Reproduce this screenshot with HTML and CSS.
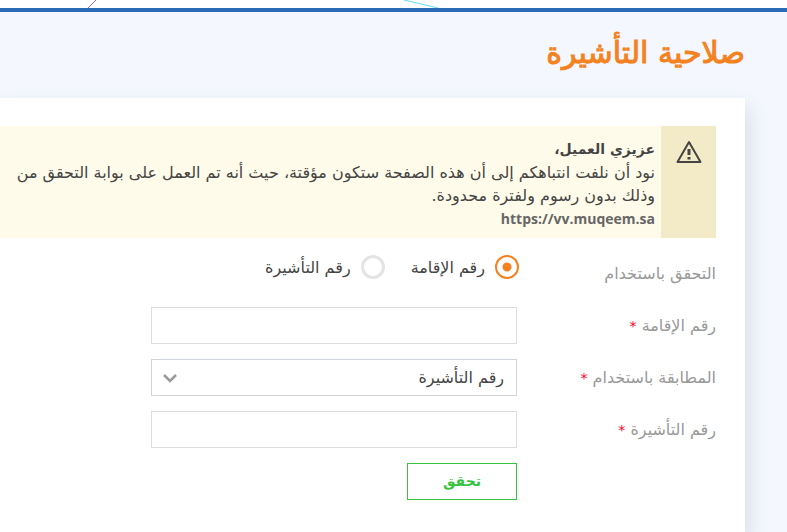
FILE: index.html
```html
<!DOCTYPE html>
<html lang="ar" dir="rtl">
<head>
<meta charset="utf-8">
<title>صلاحية التأشيرة</title>
<link rel="stylesheet" href="styles.css">
</head>
<body>
<header class="topbar">
<svg class="topbar-lines" width="460" height="8" viewBox="0 0 460 8" aria-hidden="true"><path d="M88 8L96 0" stroke="#a06aa8" fill="none"/><path d="M404 0L438 8" stroke="#5fdcf8" fill="none"/></svg>
</header>
<main class="page">
<h1 class="title">صلاحية التأشيرة</h1>
<section class="card">
<div class="notice">
<div class="notice-icon"><svg width="26" height="24" viewBox="0 0 26 24" fill="none" stroke="#444" stroke-width="2" stroke-linejoin="round"><path d="M13 2L24.500 22H1.500Z"/><path d="M13 9V15M13 17V19.500" stroke-width="3"/></svg></div>
<div class="notice-body">
<strong class="notice-title">عزيزي العميل،</strong>
<p>نود أن نلفت انتباهكم إلى أن هذه الصفحة ستكون مؤقتة، حيث أنه تم العمل على بوابة التحقق من</p>
<p>وذلك بدون رسوم ولفترة محدودة.</p>
<a href="https://vv.muqeem.sa" dir="ltr">https://vv.muqeem.sa</a>
</div>
</div>
<form class="form">
<div class="row" role="radiogroup" aria-labelledby="using">
<span class="label" id="using">التحقق باستخدام</span>
<div class="radios">
<label class="radio"><input type="radio" name="by" checked>رقم الإقامة</label>
<label class="radio"><input type="radio" name="by">رقم التأشيرة</label>
</div>
</div>
<div class="row"><label class="label" for="iqama">رقم الإقامة <span class="req">*</span></label><input class="control" id="iqama" type="text"></div>
<div class="row"><label class="label" for="match">المطابقة باستخدام <span class="req">*</span></label>
<div class="select-wrap"><select class="control" id="match"><option>رقم التأشيرة</option></select><svg class="chevron" width="14" height="9" viewBox="0 0 14 9" fill="none" stroke="#999" stroke-width="2.500"><path d="M1 1L7 7L13 1"/></svg></div></div>
<div class="row"><label class="label" for="visa">رقم التأشيرة <span class="req">*</span></label><input class="control" id="visa" type="text"></div>
<div class="row"><span class="label"></span><button class="submit" type="button">تحقق</button></div>
</form>
</section>
</main>
</body>
</html>
```

FILE: styles.css
```css
* { box-sizing: border-box; }
html { height: 100%; }
body { margin: 0; min-height: 100%; display: flex; flex-direction: column; overflow: hidden; background: #f4f8fe; color: #444; font: 16px/23px "DejaVu Sans", sans-serif; }
.topbar { height: 12px; border-bottom: 4px solid #2b6cb8; background: #fff; direction: ltr; }
.topbar-lines { display: block; }
.page { flex: 1; display: flex; flex-direction: column; padding-right: 42px; }
.title { margin: 20px 0 24px; font-size: 30px; font-weight: normal; line-height: 42px; color: #f58220; -webkit-text-stroke: 1px #f58220; }
.card { flex: 1; padding: 28px 29px 32px 0; background: #fff; box-shadow: 4px 10px 20px rgba(40, 60, 100, .14); }
.notice { display: flex; background: #fffbea; }
.notice-icon { flex: 0 0 55px; padding: 14px; background: #f3eac8; }
.notice-body { padding: 12px 6px 8px; white-space: nowrap; }
.notice-title { display: block; font-size: 14px; }
.notice-body p { margin: 0; }
.notice-body a { display: block; color: #666; font-family: "Open Sans", sans-serif; font-size: 14px; font-weight: bold; text-decoration: none; text-align: right; }
.form { display: flex; flex-direction: column; gap: 15px; padding-top: 17px; }
.row { display: flex; min-height: 37px; align-items: center; }
.label { flex: 0 0 199px; color: #999; }
.req { color: #f02; font-size: 14px; }
.radios { display: flex; gap: 26px; align-self: flex-start; margin-right: -2px; }
.radio { display: flex; gap: 10px; align-items: center; }
.radio input { appearance: none; width: 24px; height: 24px; margin: 0; border: 3px solid #e4e4e4; border-radius: 50%; }
.radio input:checked { border: 2px solid #f58220; background: radial-gradient(circle, #f58220 4px, #fff 5px); }
.control { width: 366px; height: 37px; padding: 0 12px; border: 1px solid #ddd; border-radius: 0; background: #fff; font: inherit; color: #444; }
.select-wrap { position: relative; }
select.control { appearance: none; border-color: #ced4da; }
.chevron { position: absolute; left: 12px; top: 15px; }
.submit { width: 110px; height: 37px; padding: 0; border: 1px solid #36c440; background: #fff; color: #36c440; font: inherit; font-size: 14px; font-weight: bold; }
```
